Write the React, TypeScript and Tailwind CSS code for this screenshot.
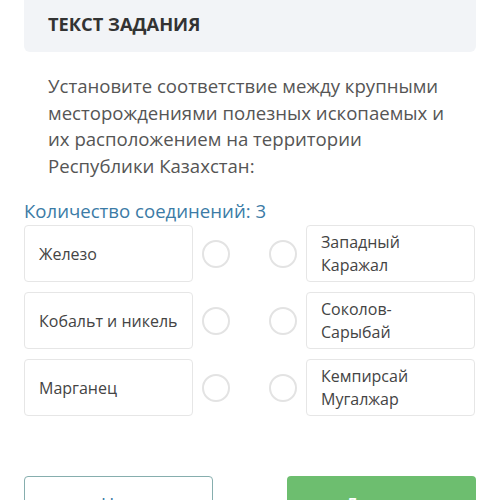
const left = ['Железо', 'Кобальт и никель', 'Марганец']
const right = ['Западный Каражал', 'Соколов-Сарыбай', 'Кемпирсай Мугалжар']

function Dot() {
  return <span className="block h-[28px] w-[28px] shrink-0 rounded-full border-2 border-[#e3e3e3] bg-white" />
}

export default function App() {
  return (
    <div
      className="h-[500px] w-[500px] overflow-hidden bg-white"
      style={{ fontFamily: '"Open Sans", "Noto Sans", sans-serif' }}
    >
      <div className="px-6">
        <div className="flex h-[52px] items-center rounded-b-md bg-[#f2f4f7] px-6 pb-[4px]">
          <h2 className="text-[18.3px] font-bold uppercase text-[#333]">Текст задания</h2>
        </div>
        <p className="mt-[21px] px-6 text-[18.6px] leading-[26.5px] text-[#555]">
          Установите соответствие между крупными месторождениями полезных ископаемых и их
          расположением на территории Республики Казахстан:
        </p>
        <div className="mt-[20px] text-[18.6px] leading-[24px] text-[#3b7ba6]">
          Количество соединений: 3
        </div>
        <div className="mt-[2px] flex flex-col gap-[10px]">
          {left.map((l, i) => (
            <div key={l} className="flex items-center">
              <div className="flex h-[57px] w-[169px] items-center rounded-[4px] border border-[#e6e6e6] px-[14px] text-[16px] text-[#444]">
                {l}
              </div>
              <div className="ml-[9px]">
                <Dot />
              </div>
              <div className="ml-[39px]">
                <Dot />
              </div>
              <div className="ml-[9px] flex h-[57px] w-[169px] items-center rounded-[4px] border border-[#e6e6e6] px-[14px] text-[16px] leading-[23px] text-[#444]">
                {right[i]}
              </div>
            </div>
          ))}
        </div>
        <div className="mt-[60px] flex justify-between">
          <button className="flex h-[56px] w-[189px] items-center justify-center gap-3 rounded-[4px] border-[1.5px] border-[#86aeae] text-[18px] text-[#3b7ba6]">
            <span>‹</span>
            <span>Назад</span>
          </button>
          <button className="flex h-[56px] w-[189px] items-center justify-center gap-3 rounded-[4px] bg-[#6dbe6f] text-[18px] font-semibold text-white">
            <span>Далее</span>
            <span>›</span>
          </button>
        </div>
      </div>
    </div>
  )
}
